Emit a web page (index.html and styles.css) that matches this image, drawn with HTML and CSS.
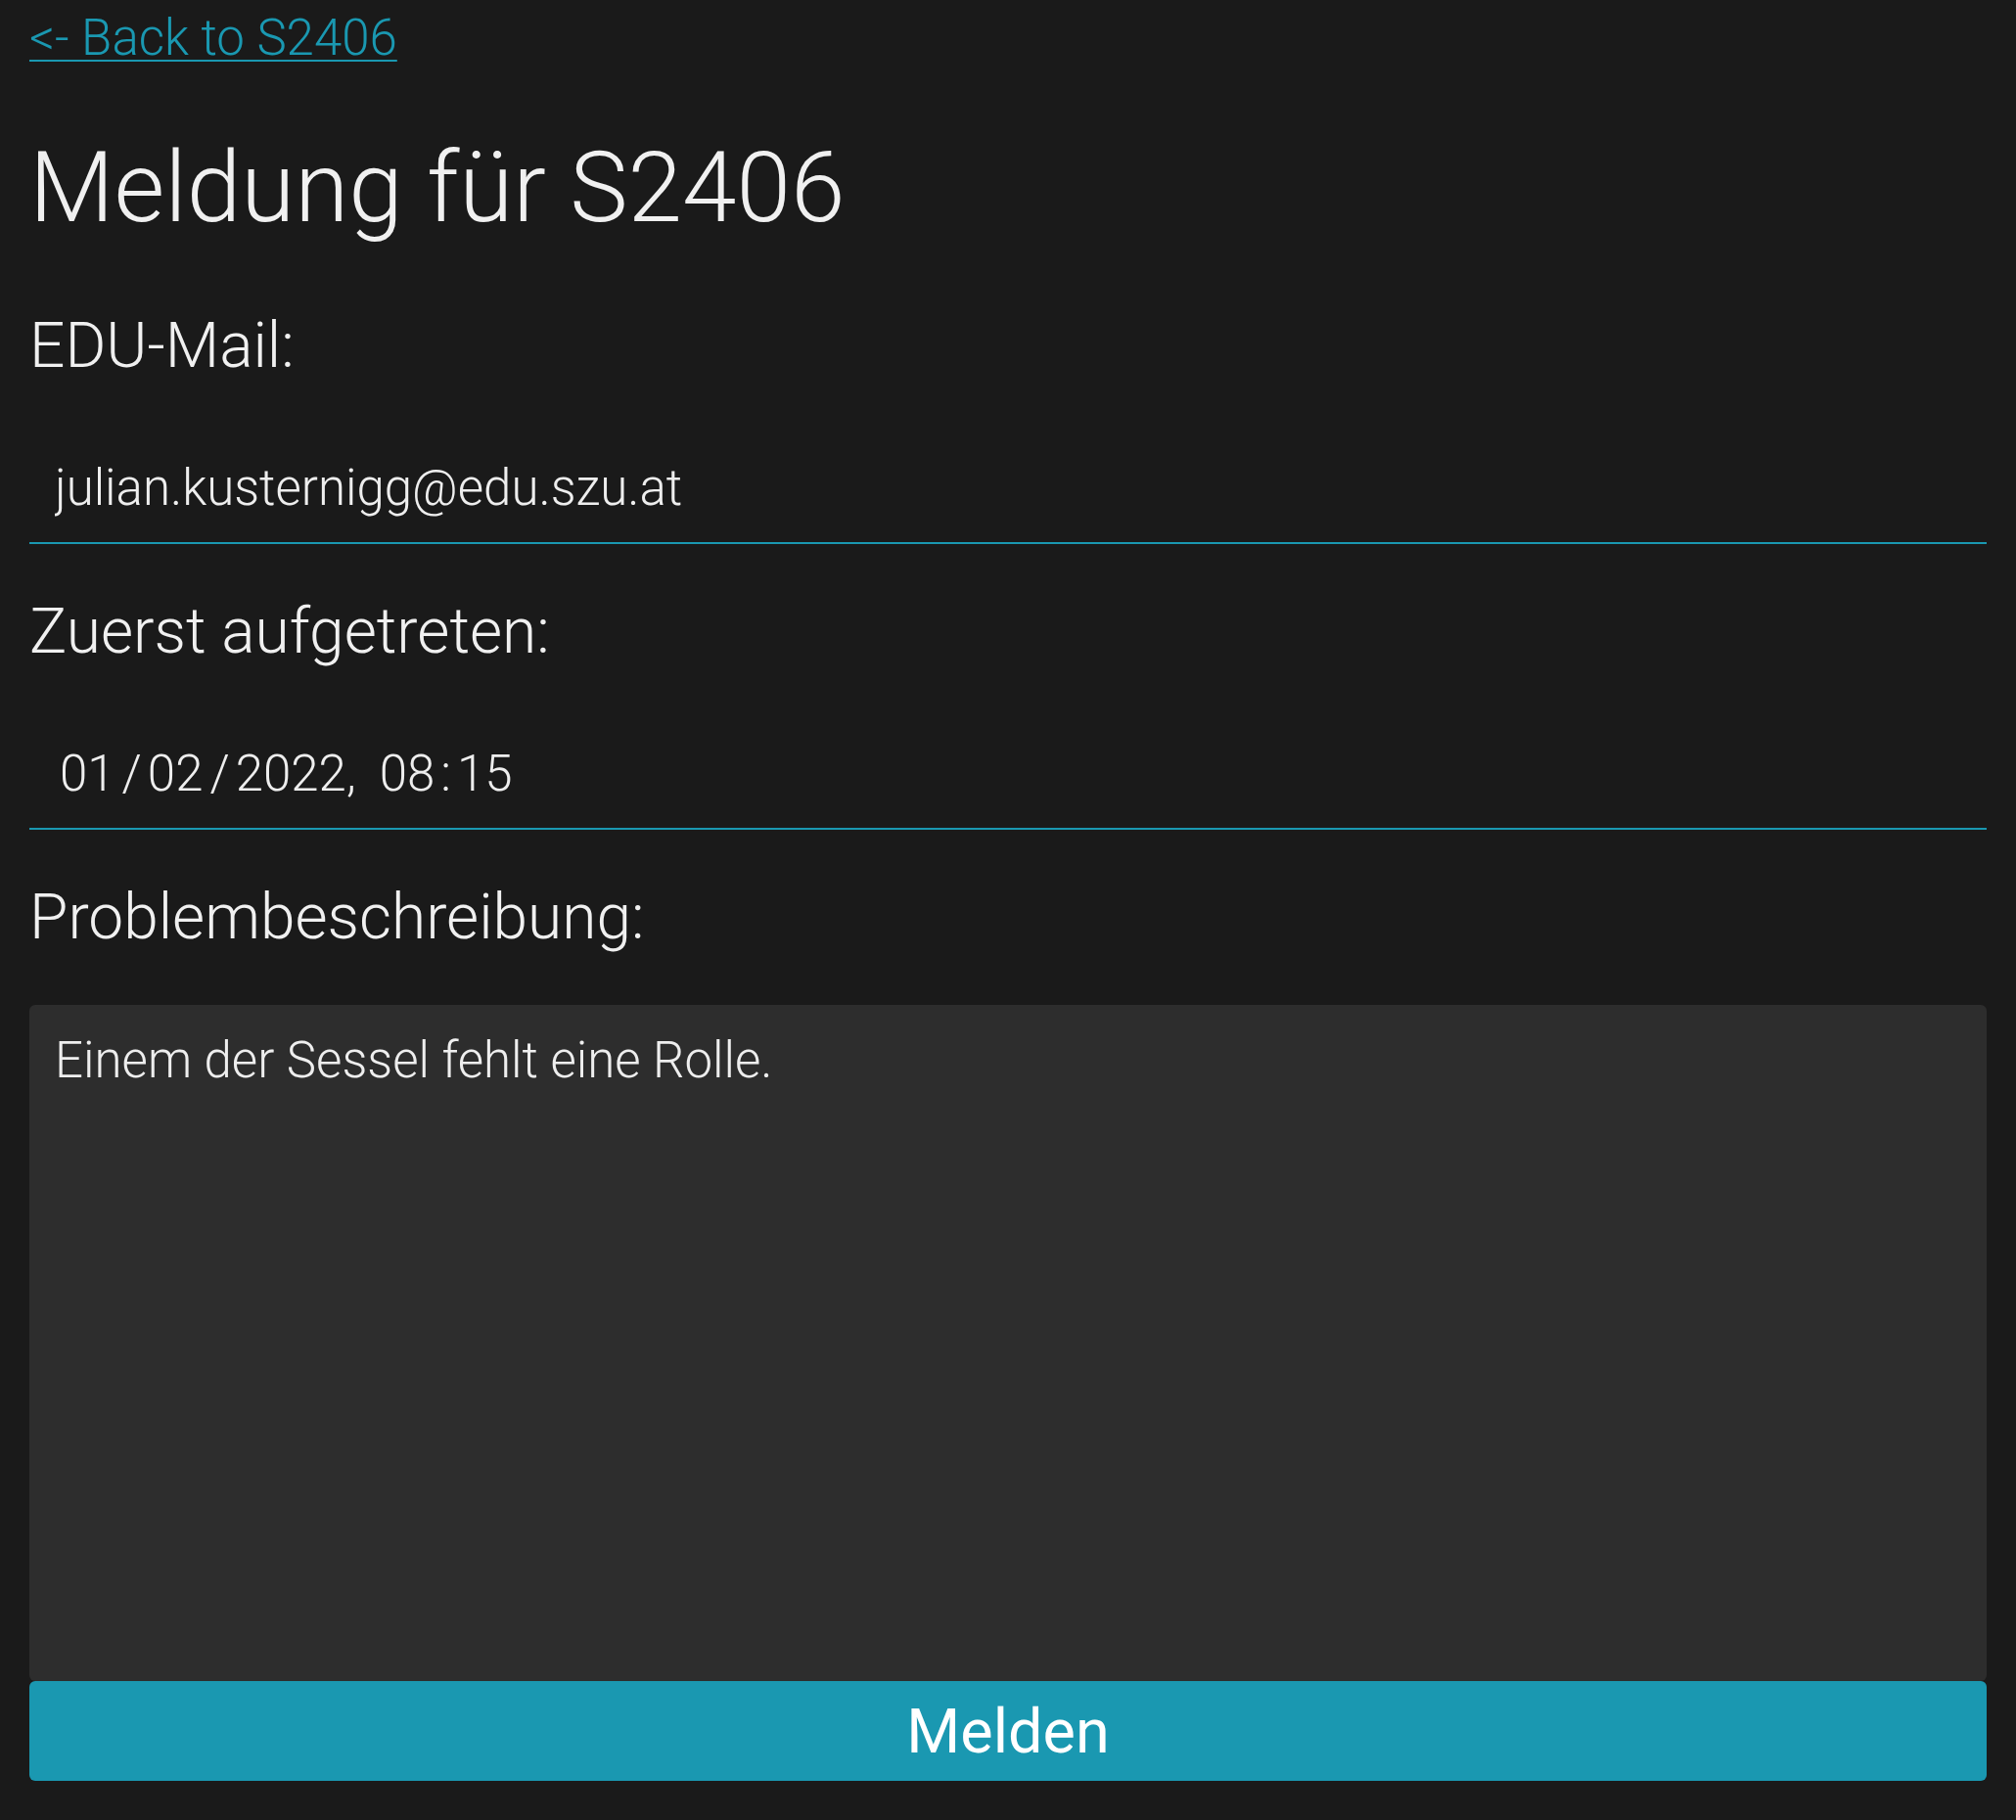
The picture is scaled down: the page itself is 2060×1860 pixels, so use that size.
FILE: index.html
```html
<!DOCTYPE html>
<html lang="de">
<head>
<meta charset="utf-8">
<title>Meldung für S2406</title>
<link rel="stylesheet" href="styles.css">
</head>
<body>
<div class="page">
  <div class="back"><a href="#" class="back-link">&lt;- Back to S2406</a></div>
  <h1 class="title">Meldung für S2406</h1>
  <form class="form">
    <label class="label" for="mail">EDU-Mail:</label>
    <input class="field" id="mail" type="text" value="julian.kusternigg@edu.szu.at">
    <label class="label">Zuerst aufgetreten:</label>
    <div class="field date-field"><span>01</span><span class="sep">/</span><span>02</span><span class="sep">/</span><span>2022</span><span class="comma">,</span><span>08</span><span class="colon">:</span><span>15</span></div>
    <label class="label" for="desc">Problembeschreibung:</label>
    <textarea class="area" id="desc">Einem der Sessel fehlt eine Rolle.</textarea>
    <button class="submit" type="button">Melden</button>
  </form>
</div>
</body>
</html>
```

FILE: styles.css
```css
html, body {
  margin: 0;
  padding: 0;
  background: #1a1a1a;
}

body {
  font-family: Roboto, "Noto Sans", sans-serif;
  font-weight: 300;
  color: #eeeeee;
}

.page {
  padding: 8px 30px 40px;
  display: flex;
  flex-direction: column;
}

.back {
  font-size: 51px;
  line-height: 61px;
}

.back-link {
  color: #1a98b1;
  text-decoration: underline;
  text-decoration-thickness: 2px;
  text-underline-offset: 5px;
}

.title {
  margin: 64px 0 66px;
  font-size: 100px;
  font-weight: 300;
  line-height: 117px;
  color: #f0f0f0;
}

.form {
  display: flex;
  flex-direction: column;
}

.label {
  font-size: 64px;
  line-height: 75px;
  margin-bottom: 52px;
  color: #f0f0f0;
}

.field {
  box-sizing: border-box;
  width: 100%;
  height: 113px;
  margin: 0 0 52px;
  padding: 26px 26px;
  font-family: Roboto, "Noto Sans", sans-serif;
  font-weight: 300;
  font-size: 51px;
  line-height: 59px;
  color: #eeeeee;
  background: transparent;
  border: none;
  border-bottom: 2px solid #1a98b1;
  outline: none;
}

.date-field {
  display: flex;
  align-items: baseline;
  padding-left: 31px;
  font-size: 51px;
}

.sep {
  margin: 0 6px 0 7px;
}

.comma {
  margin-right: 24px;
}

.colon {
  margin: 0 6px;
}

.area {
  box-sizing: border-box;
  width: 100%;
  height: 691px;
  margin: 0;
  padding: 27px 26px 26px;
  font-family: Roboto, "Noto Sans", sans-serif;
  font-weight: 300;
  font-size: 51px;
  line-height: 59px;
  color: #eeeeee;
  background: #2d2d2d;
  border: none;
  border-radius: 6px;
  outline: none;
  resize: none;
  display: block;
}

.submit {
  box-sizing: border-box;
  width: 100%;
  height: 102px;
  margin: 0;
  padding: 0;
  font-family: Roboto, "Noto Sans", sans-serif;
  font-weight: 400;
  font-size: 63px;
  color: #ffffff;
  background: #1a98b1;
  border: none;
  border-radius: 6px;
}
```
